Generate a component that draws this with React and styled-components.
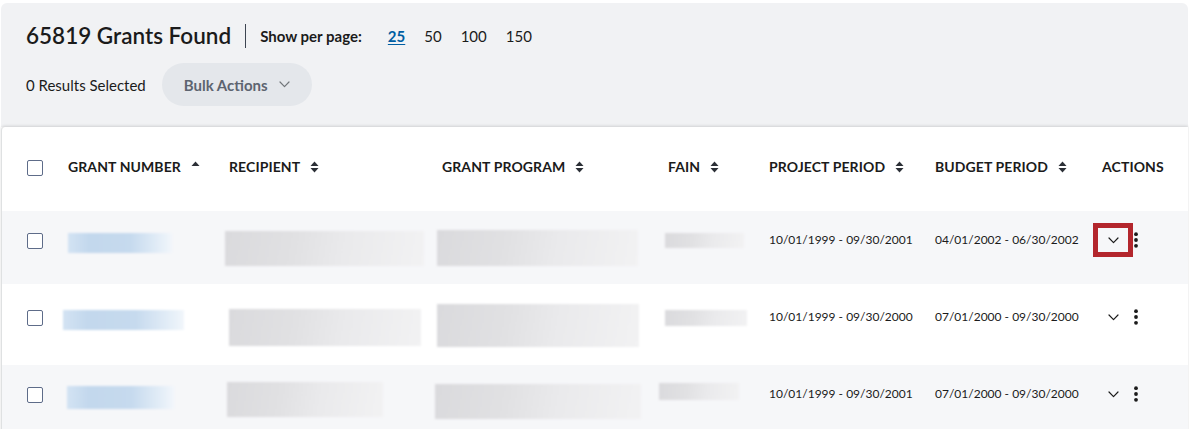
import React from "react";
import styled, { createGlobalStyle } from "styled-components";

const GlobalStyle = createGlobalStyle`
  html, body { margin: 0; padding: 0; background: #fff; }
  body {
    font-family: Lato, "Noto Sans", "Liberation Sans", sans-serif;
    color: #1b1b1b;
    overflow: hidden;
  }
  * { box-sizing: border-box; }
`;

const Page = styled.div`
  padding: 3px 1px 0 1px;
`;

const Toolbar = styled.section`
  background: #f1f2f4;
  border-radius: 6px 6px 0 0;
  padding: 17px 25px 21px;
  display: flex;
  flex-direction: column;
  gap: 11px;
`;

const TitleRow = styled.div`
  display: flex;
  align-items: center;
  height: 32px;
`;

const Title = styled.h2`
  margin: 0;
  font-size: 22.5px;
  line-height: 32px;
  font-weight: 600;
  color: #1b1b1b;
`;

const Divider = styled.span`
  width: 1px;
  height: 24px;
  background: #3d4551;
  margin: 0 14px;
`;

const PerPageLabel = styled.span`
  font-size: 15px;
  font-weight: 700;
  margin-right: 26px;
`;

const PageOptions = styled.div`
  display: flex;
  gap: 19px;
`;

const PageOption = styled.a`
  font-size: 15px;
  color: ${(p) => (p.$active ? "#005ea2" : "#1b1b1b")};
  font-weight: ${(p) => (p.$active ? 700 : 400)};
  text-decoration: ${(p) => (p.$active ? "underline" : "none")};
  text-underline-offset: 2px;
  cursor: pointer;
`;

const SelectionRow = styled.div`
  display: flex;
  align-items: center;
  gap: 16px;
  height: 43px;
`;

const SelectedText = styled.span`
  font-size: 15px;
  color: #1b1b1b;
`;

const BulkButton = styled.button`
  height: 43px;
  padding: 0 22px;
  border: none;
  border-radius: 22px;
  background: #e4e7eb;
  color: #5d6470;
  font-family: inherit;
  font-size: 15px;
  font-weight: 700;
  display: flex;
  align-items: center;
  gap: 11px;
`;

const TableCard = styled.section`
  background: #fff;
  border-left: 1px solid #dfe1e2;
  border-radius: 4px 0 0 0;
  box-shadow: 0 -1px 3px rgba(0, 0, 0, 0.14);
`;

const columns = "41px 161px 213px 226px 101px 166px 167px 1fr";

const HeaderRow = styled.div`
  display: grid;
  grid-template-columns: ${columns};
  align-items: start;
  height: 84px;
  padding: 31px 0 0 25px;
`;

const HeaderCell = styled.div`
  display: flex;
  align-items: center;
  gap: 10px;
  font-size: 14px;
  font-weight: 700;
  line-height: 18px;
  text-transform: uppercase;
  letter-spacing: 0.1px;
  white-space: nowrap;
`;

const Row = styled.div`
  display: grid;
  grid-template-columns: ${columns};
  align-items: start;
  height: ${(p) => p.$h}px;
  padding: ${(p) => p.$pt}px 0 0 25px;
  background: ${(p) => (p.$shaded ? "#f6f7f9" : "#fff")};
`;

const Checkbox = styled.span`
  display: block;
  width: 16px;
  height: 16px;
  border: 1.5px solid #5e6c89;
  border-radius: 2px;
  background: #fff;
  margin-top: ${(p) => p.$mt || 0}px;
`;

const Blur = styled.div`
  width: ${(p) => p.$w}px;
  height: ${(p) => p.$h}px;
  margin-left: ${(p) => p.$dx}px;
  margin-top: ${(p) => p.$dy}px;
  background: ${(p) =>
    p.$tone === "blue"
      ? "linear-gradient(90deg, #d3e3f3 0%, #c3d8ed 20%, #c6daee 60%, #e6eff8 90%, #f2f6fb 100%)"
      : "linear-gradient(100deg, #dadadd 0%, #e1e1e3 35%, #eaeaec 60%, #f2f2f3 100%)"};
  filter: blur(1.2px);
`;

const DateText = styled.div`
  font-size: 12px;
  line-height: 16px;
  margin-top: -1px;
  white-space: nowrap;
`;

const ActionsCell = styled.div`
  display: flex;
  align-items: center;
  margin-left: -9px;
  margin-top: -10px;
`;

const ExpandButton = styled.button`
  width: 40px;
  height: 34px;
  border: 5px solid ${(p) => (p.$focused ? "#b3262d" : "transparent")};
  background: transparent;
  padding: 0;
  display: flex;
  align-items: center;
  justify-content: center;
`;

const MenuButton = styled.button`
  border: none;
  background: transparent;
  padding: 0;
  display: flex;
  align-items: center;
`;

const Chevron = ({ color = "#1b1b1b", w = 11 }) => (
  <svg width={w} height="7" viewBox="0 0 11 7" fill="none">
    <polyline points="1,1 5.5,5.6 10,1" stroke={color} strokeWidth="1.2" strokeLinecap="round" strokeLinejoin="round" />
  </svg>
);

const Dots = () => (
  <svg width="6" height="16" viewBox="0 0 6 16">
    <circle cx="3" cy="2.2" r="1.9" fill="#1b1b1b" />
    <circle cx="3" cy="8" r="1.9" fill="#1b1b1b" />
    <circle cx="3" cy="13.8" r="1.9" fill="#1b1b1b" />
  </svg>
);

const SortIcon = ({ asc }) => (
  <svg width="9" height="14" viewBox="0 0 9 14">
    <polygon points="0.5,6 4.5,1.5 8.5,6" fill="#2b2f36" />
    {!asc && <polygon points="0.5,8 8.5,8 4.5,12.5" fill="#2b2f36" />}
  </svg>
);

const headers = [
  { label: "Grant Number", sort: "asc" },
  { label: "Recipient", sort: "both" },
  { label: "Grant Program", sort: "both" },
  { label: "FAIN", sort: "both" },
  { label: "Project Period", sort: "both" },
  { label: "Budget Period", sort: "both" },
  { label: "Actions", sort: null },
];

const rows = [
  {
    h: 73, pt: 22, shaded: true, focused: true,
    grant: [104, 20, 0, 0], recipient: [199, 35, -4, -2], program: [201, 36, -5, -3], fain: [79, 15, -3, 0],
    project: "10/01/1999 - 09/30/2001", budget: "04/01/2002 - 06/30/2002",
  },
  {
    h: 81, pt: 26, shaded: false, focused: false,
    grant: [121, 20, -5, 0], recipient: [192, 37, 0, -1], program: [202, 43, -5, -6], fain: [82, 16, -3, 0],
    project: "10/01/1999 - 09/30/2000", budget: "07/01/2000 - 09/30/2000",
  },
  {
    h: 80, pt: 22, shaded: true, focused: false,
    grant: [107, 23, -1, -1], recipient: [156, 35, -2, -5], program: [206, 35, -7, -3], fain: [80, 17, -9, -4],
    project: "10/01/1999 - 09/30/2001", budget: "07/01/2000 - 09/30/2000",
  },
];

const B = ({ v, tone }) => <Blur $w={v[0]} $h={v[1]} $dx={v[2]} $dy={v[3]} $tone={tone} />;

export default function App() {
  return (
    <>
      <GlobalStyle />
      <Page>
        <Toolbar>
          <TitleRow>
            <Title>65819 Grants Found</Title>
            <Divider />
            <PerPageLabel>Show per page:</PerPageLabel>
            <PageOptions>
              <PageOption $active>25</PageOption>
              <PageOption>50</PageOption>
              <PageOption>100</PageOption>
              <PageOption>150</PageOption>
            </PageOptions>
          </TitleRow>
          <SelectionRow>
            <SelectedText>0 Results Selected</SelectedText>
            <BulkButton>
              Bulk Actions
              <Chevron color="#71767a" w={11} />
            </BulkButton>
          </SelectionRow>
        </Toolbar>
        <TableCard>
          <HeaderRow>
            <Checkbox $mt={2} />
            {headers.map((h) => (
              <HeaderCell key={h.label}>
                {h.label}
                {h.sort && <SortIcon asc={h.sort === "asc"} />}
              </HeaderCell>
            ))}
          </HeaderRow>
          {rows.map((r, i) => (
            <Row key={i} $h={r.h} $pt={r.pt} $shaded={r.shaded}>
              <Checkbox />
              <B v={r.grant} tone="blue" />
              <B v={r.recipient} tone="gray" />
              <B v={r.program} tone="gray" />
              <B v={r.fain} tone="gray" />
              <DateText>{r.project}</DateText>
              <DateText>{r.budget}</DateText>
              <ActionsCell>
                <ExpandButton $focused={r.focused}>
                  <Chevron />
                </ExpandButton>
                <MenuButton>
                  <Dots />
                </MenuButton>
              </ActionsCell>
            </Row>
          ))}
        </TableCard>
      </Page>
    </>
  );
}
